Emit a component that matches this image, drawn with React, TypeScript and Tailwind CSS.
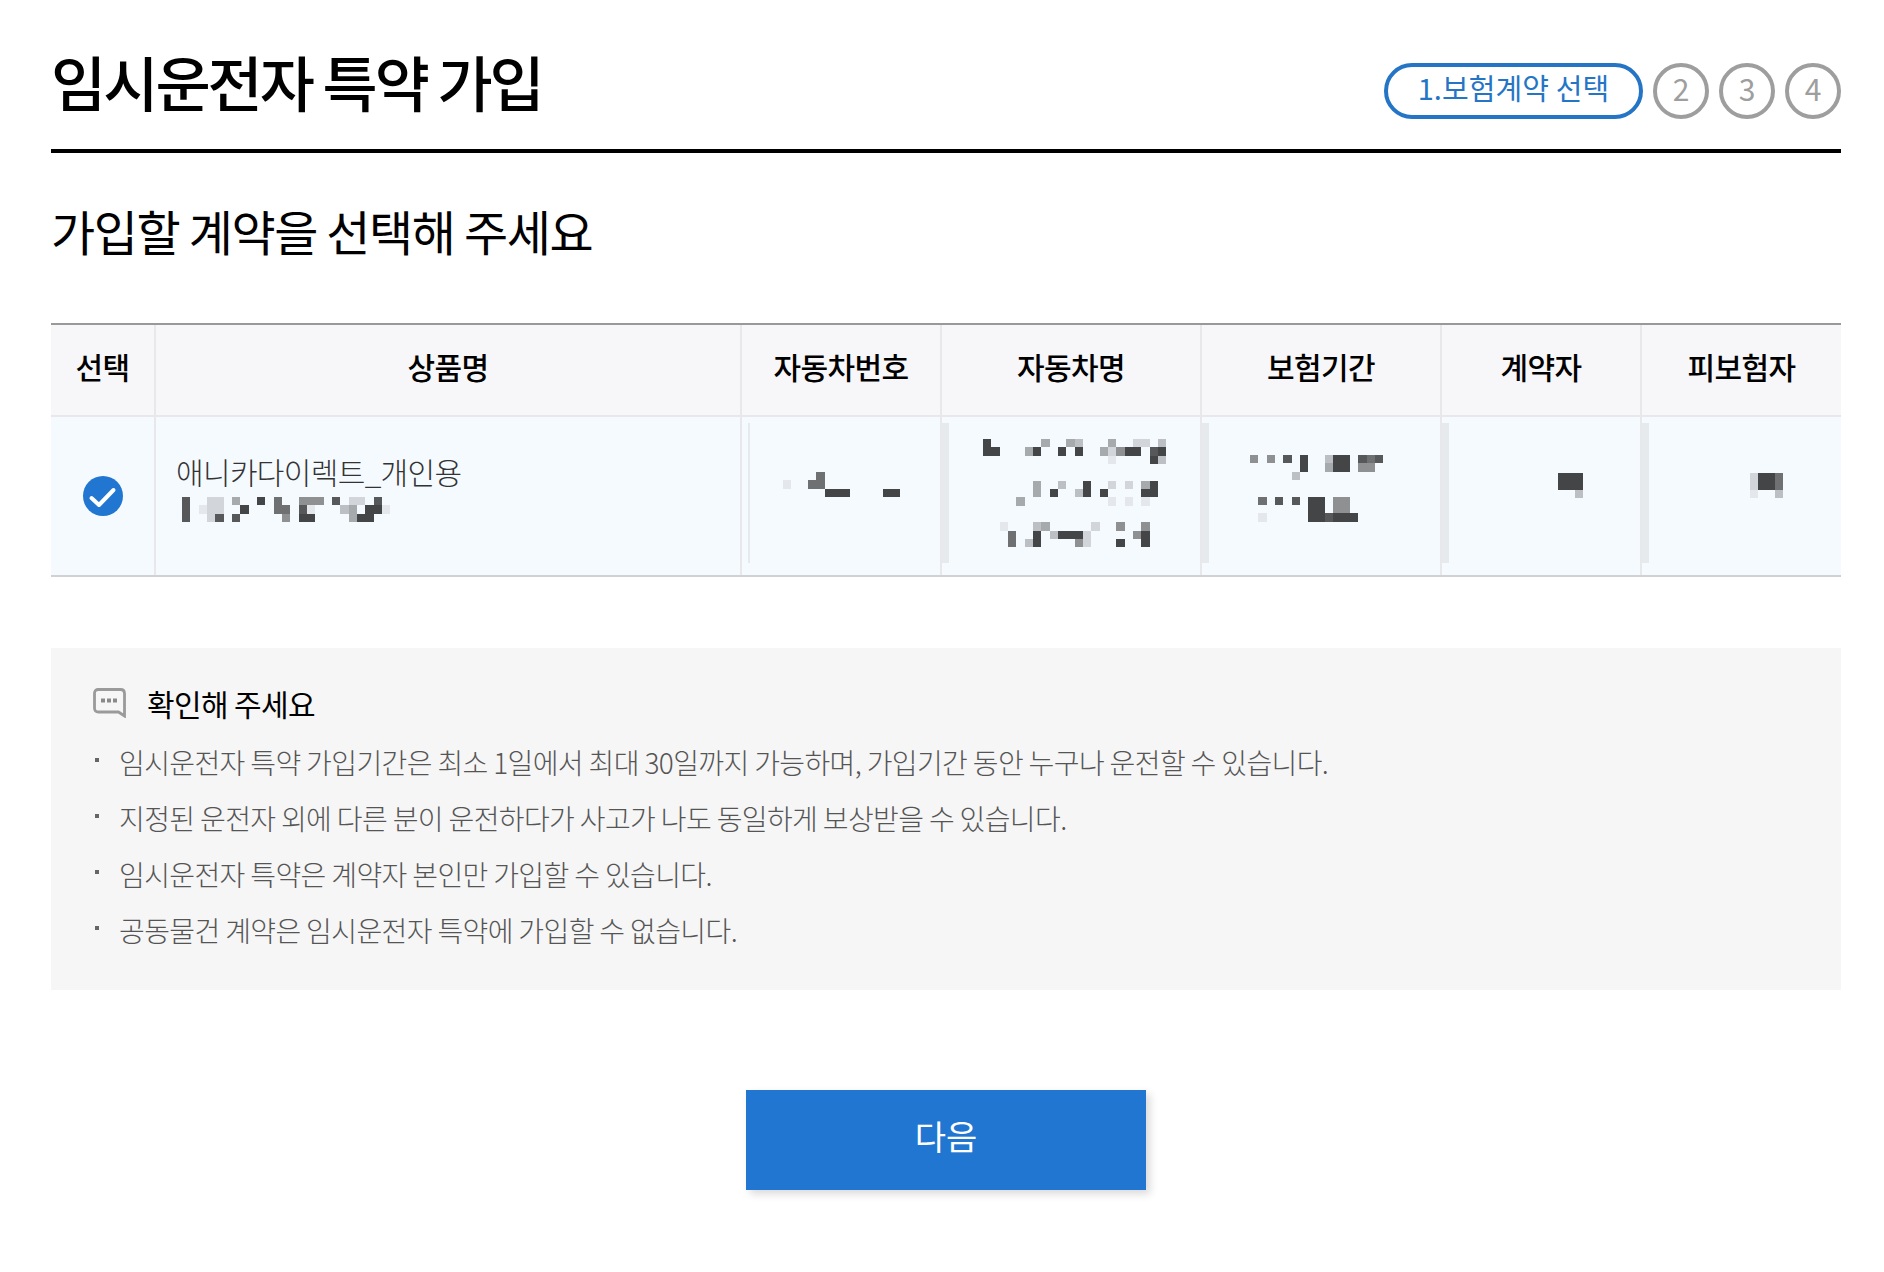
const FONT = '"Noto Sans CJK KR", "Noto Sans", sans-serif';

const SHADES: Record<string, string> = {
  a: '#e4e8ec',
  b: '#d2d6da',
  c: '#bcc0c4',
  d: '#a6aaac',
  e: '#8e9092',
  f: '#6e7072',
  g: '#565859',
  h: '#434546',
};

function Mosaic({ rows, className }: { rows: string[]; className?: string }) {
  const cell = 25 / 3;
  const cols = Math.max(...rows.map((r) => r.length));
  return (
    <svg
      className={className}
      width={cols * cell}
      height={rows.length * cell}
      viewBox={`0 0 ${cols * cell} ${rows.length * cell}`}
      shapeRendering="crispEdges"
    >
      {rows.map((row, y) =>
        row.split('').map((ch, x) =>
          ch === '.' ? null : (
            <rect key={`${x}-${y}`} x={x * cell} y={y * cell} width={cell} height={cell} fill={SHADES[ch]} />
          ),
        ),
      )}
    </svg>
  );
}

const HEADERS = ['선택', '상품명', '자동차번호', '자동차명', '보험기간', '계약자', '피보험자'];

const NOTES = [
  '임시운전자 특약 가입기간은 최소 1일에서 최대 30일까지 가능하며, 가입기간 동안 누구나 운전할 수 있습니다.',
  '지정된 운전자 외에 다른 분이 운전하다가 사고가 나도 동일하게 보상받을 수 있습니다.',
  '임시운전자 특약은 계약자 본인만 가입할 수 있습니다.',
  '공동물건 계약은 임시운전자 특약에 가입할 수 없습니다.',
];

const productMosaic = [
  'g..bb.d..h.f..eee.g.bb.g.',
  'g.abb..h...ff.ga...cd.hha',
  'g..bg.g.....e.hh....dhh..',
];

const plateMosaic = ['....f.........', 'a..ff.........', '.....hhh....hh'];

const carMosaic = [
  'h......d..dc...d..bb.c',
  'hh...dh..h.h..dbehh.gh',
  '...............a....hc',
  '......................',
  '......................',
  '......d..c..h..b.b.dh',
  '......d.h..ch.h....hh',
  '....d..........a.a.a',
  '......................',
  '......................',
  '..a...cd.....b..e..e',
  '...f..h.chhhb.....eh',
  '...f.ch....eb...h..h',
];

const periodMosaic = [
  'e.e.g.h..chh.gfg',
  '......h..dhh.ee',
  '.....c',
  '',
  '',
  '.f.g.g.hh.ee',
  '.......hh.ee',
  '.a.....hhghhh',
];

const ownerMosaic = ['hhh', 'hhh', '..c'];
const insuredMosaic = ['bhhf', 'bhhf', 'a..c'];

function Bar({ thin }: { thin?: boolean }) {
  return (
    <div className={`mt-[6px] h-[140px] shrink-0 bg-[#e7eaec] ${thin ? 'ml-[6px] w-[2px]' : 'w-[7px]'}`} />
  );
}

export default function App() {
  return (
    <div
      className="mx-[51px] w-[1790px] bg-white pt-[40px] pb-[82px] text-black"
      style={{ fontFamily: FONT }}
    >
      <div className="flex h-[113px] items-start justify-between border-b-4 border-black">
        <h1 className="text-[60px] leading-[82px] font-medium tracking-[-3px]">임시운전자 특약 가입</h1>
        <div className="mt-[23px] flex gap-[10px]">
          <div className="flex h-[56px] w-[259px] items-center justify-center rounded-full border-4 border-[#2575c6] pb-[6px] text-[29px] tracking-[0.1px] text-[#2575c6]">
            1.보험계약 선택
          </div>
          {['2', '3', '4'].map((n) => (
            <div
              key={n}
              className="flex h-[56px] w-[56px] items-center justify-center rounded-full border-4 border-[#9e9e9e] pb-[5px] text-[30px] text-[#9e9e9e]"
            >
              {n}
            </div>
          ))}
        </div>
      </div>

      <h2 className="mt-[42px] text-[48px] leading-[70px] font-normal tracking-[-1.4px]">가입할 계약을 선택해 주세요</h2>

      <div className="mt-[58px] border-t-2 border-b-2 border-t-[#999999] border-b-[#cfd1d3]">
        <div className="grid h-[92px] grid-cols-[105px_586px_200px_260px_240px_200px_199px] border-b-2 border-[#e8e8ea] bg-[#f7f7f9]">
          {HEADERS.map((h, i) => (
            <div
              key={h}
              className={`flex items-center justify-center pb-[7px] text-[30px] font-medium tracking-[-0.6px] ${
                i < 6 ? 'border-r-2 border-[#e8e8ea]' : ''
              }`}
            >
              {h}
            </div>
          ))}
        </div>
        <div className="grid h-[158px] grid-cols-[105px_586px_200px_260px_240px_200px_199px] bg-[#f5faff]">
          <div className="flex items-center justify-center border-r-2 border-[#e8e8ea]">
            <svg width="40" height="40" viewBox="0 0 40 40">
              <circle cx="20" cy="20" r="20" fill="#2076d0" />
              <path
                d="M8.5 22 L16 29 L30.5 14"
                fill="none"
                stroke="#fff"
                strokeWidth="4"
                strokeLinecap="round"
                strokeLinejoin="round"
              />
            </svg>
          </div>
          <div className="border-r-2 border-[#e8e8ea] pt-[32px] pl-[20px]">
            <div className="text-[30px] leading-[44px] font-light tracking-[-0.65px] text-[#333]">애니카다이렉트_개인용</div>
            <Mosaic className="mt-[4px] ml-[6px]" rows={productMosaic} />
          </div>
          <div className="flex border-r-2 border-[#e8e8ea]">
            <Bar thin />
            <Mosaic className="mt-[55px] ml-[33px]" rows={plateMosaic} />
          </div>
          <div className="flex border-r-2 border-[#e8e8ea]">
            <Bar />
            <Mosaic className="mt-[22px] ml-[34px]" rows={carMosaic} />
          </div>
          <div className="flex border-r-2 border-[#e8e8ea]">
            <Bar />
            <Mosaic className="mt-[38px] ml-[41px]" rows={periodMosaic} />
          </div>
          <div className="flex border-r-2 border-[#e8e8ea]">
            <Bar />
            <Mosaic className="mt-[56px] ml-[109px]" rows={ownerMosaic} />
          </div>
          <div className="flex">
            <Bar />
            <Mosaic className="mt-[56px] ml-[101px]" rows={insuredMosaic} />
          </div>
        </div>
      </div>

      <div className="mt-[71px] h-[342px] bg-[#f6f6f6] pt-[35px] pl-[42px]">
        <div className="flex h-[40px] items-center">
          <svg width="33" height="30" viewBox="0 0 33 30" fill="none">
            <path
              d="M5.5 1.5 H27.5 Q31.5 1.5 31.5 5.5 V28 L25.5 24 H5.5 Q1.5 24 1.5 20 V5.5 Q1.5 1.5 5.5 1.5 Z"
              stroke="#9a9a9a"
              strokeWidth="2.8"
            />
            <rect x="8" y="10.5" width="4" height="4" fill="#8a8a8a" />
            <rect x="14" y="10.5" width="4" height="4" fill="#8a8a8a" />
            <rect x="20" y="10.5" width="4" height="4" fill="#8a8a8a" />
          </svg>
          <div className="ml-[21px] text-[30px] leading-[40px] tracking-[-0.6px]">확인해 주세요</div>
        </div>
        <ul className="mt-[11px] text-[28px] leading-[56px] font-light tracking-[-0.62px] text-[#555]">
          {NOTES.map((n) => (
            <li key={n} className="flex">
              <span className="mt-[24px] mr-[20px] ml-[2px] h-[4px] w-[4px] bg-[#666]" />
              <span>{n}</span>
            </li>
          ))}
        </ul>
      </div>

      <div className="mt-[100px] flex justify-center">
        <button className="h-[100px] w-[400px] bg-[#2076d0] text-[34px] text-white shadow-[4px_4px_8px_rgba(0,0,0,0.15)]">
          <span className="relative -top-[5px]">다음</span>
        </button>
      </div>
    </div>
  );
}
